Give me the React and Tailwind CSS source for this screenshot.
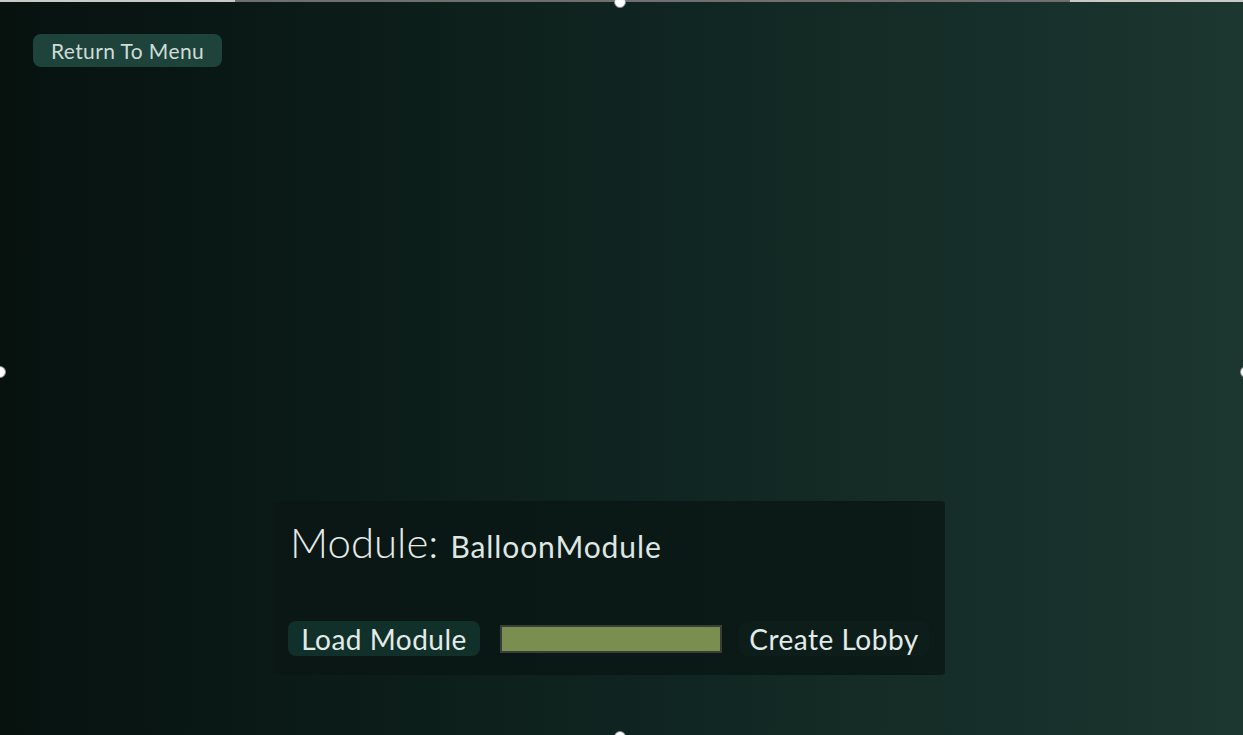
export default function App() {
  return (
    <div
      className="relative w-[1243px] h-[735px] overflow-hidden bg-gradient-to-r from-[#07120f] via-[#0f2420] to-[#1c3630] text-[#dfe7e4]"
      style={{ fontFamily: "Lato, 'Noto Sans', sans-serif" }}
    >
      {/* top edge line (selection frame) */}
      <div className="absolute top-0 left-0 right-0 h-[2px] flex">
        <div className="w-[235px] bg-[#c9c9c6]" />
        <div className="flex-1 bg-[#6f706e]" />
        <div className="w-[173px] bg-[#c9c9c6]" />
      </div>
      {/* selection handles */}
      <div className="absolute top-[-4px] left-[614px] w-3 h-3 rounded-full bg-white border border-[#888]" />
      <div className="absolute top-[366px] left-[-6px] w-3 h-3 rounded-full bg-white border border-[#888]" />
      <div className="absolute top-[366px] right-[-9px] w-3 h-3 rounded-full bg-white border border-[#888]" />
      <div className="absolute bottom-[-8px] left-[614px] w-3 h-3 rounded-full bg-white border border-[#888]" />

      <div className="flex flex-col h-full pt-[34px] pl-[33px]">
        <button className="self-start h-[33px] w-[189px] rounded-lg bg-[#1d433a] text-[21px] tracking-[0.4px] leading-none text-[#cfdcd8]">
          Return To Menu
        </button>

        <div className="mt-[434px] ml-[240px] w-[672px] h-[174px] rounded bg-[#0a1614]/80 px-4 pt-5 flex flex-col">
          <div className="flex items-baseline gap-3 ml-[1px]">
            <span className="text-[42px] leading-none font-light text-[#e4ebe8]">Module:</span>
            <span className="text-[30px] tracking-[0.9px] leading-none text-[#dfe7e4]">BalloonModule</span>
          </div>
          <div className="flex items-center mt-[58px] -ml-[1px]">
            <button className="h-[35px] w-[193px] rounded-lg bg-[#12302a] text-[28px] tracking-[0.5px] leading-none text-[#e3ebe8]">
              Load Module
            </button>
            <div className="ml-[20px] w-[223px] h-[28px] border-2 border-[#3a3e38] bg-[#7a8f4f]" />
            <button className="ml-[17px] h-[35px] w-[191px] rounded-lg bg-[#0d1d1a] text-[28px] tracking-[0.5px] leading-none text-[#e3ebe8]">
              Create Lobby
            </button>
          </div>
        </div>
      </div>
    </div>
  );
}
